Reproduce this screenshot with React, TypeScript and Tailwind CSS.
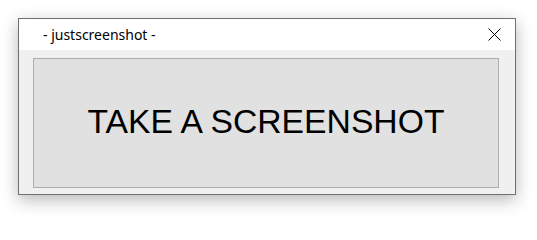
export default function App() {
  return (
    <div className="w-[537px] h-[216px] bg-white pt-[18px] pl-[18px]">
      <div className="w-[498px] h-[177px] border border-[#707070] bg-[#f0f0f0] flex flex-col shadow-[0_5px_16px_rgba(0,0,0,0.28)]">
        <div className="h-[31px] bg-white flex items-center justify-between pl-[24px] pr-[14px]">
          <span className="text-[14px] text-black font-['Noto_Sans',sans-serif] leading-none">- justscreenshot -</span>
          <svg width="13" height="13" viewBox="0 0 13 13" className="text-black">
            <path d="M0.5 0.5 L12.5 12.5 M12.5 0.5 L0.5 12.5" stroke="currentColor" strokeWidth="1" fill="none" />
          </svg>
        </div>
        <div className="flex-1 pl-[14px] pt-[8px]">
          <button className="w-[466px] h-[130px] bg-[#e1e1e1] border border-[#adadad] flex items-center justify-center pb-[4px] text-[33.7px] text-black font-['Liberation_Sans',Arial,sans-serif]">
            TAKE A SCREENSHOT
          </button>
        </div>
      </div>
    </div>
  );
}
